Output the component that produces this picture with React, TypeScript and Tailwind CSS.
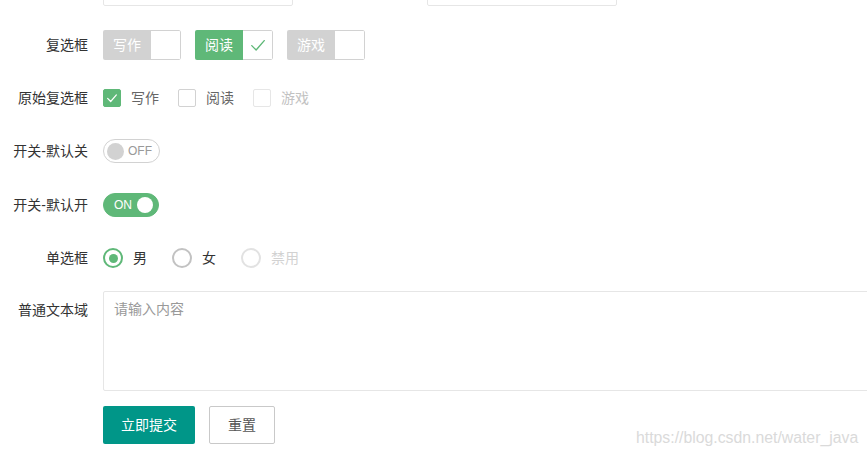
import React from "react";

const font = { fontFamily: '"Liberation Sans", "Noto Sans CJK SC", sans-serif' };

function Label({ text, top }: { text: string; top?: boolean }) {
  return (
    <div
      className={`w-[103px] shrink-0 pr-[15px] text-right text-[14px] leading-[20px] text-[#333] ${
        top ? "self-start pt-[9px]" : ""
      }`}
    >
      {text}
    </div>
  );
}

function Check({ className, width = 1.4 }: { className: string; width?: number }) {
  return (
    <svg viewBox="0 0 16 16" className={className} fill="none">
      <polyline points="3,8.5 6.5,12 13,4.5" stroke="currentColor" strokeWidth={width} strokeLinecap="round" strokeLinejoin="round" />
    </svg>
  );
}

function SkinCheckbox({ text, checked }: { text: string; checked?: boolean }) {
  return (
    <div className="flex h-[30px] w-[78px] shrink-0 overflow-hidden rounded-[2px]">
      <span
        className={`flex h-full w-[48px] items-center justify-center text-[14px] text-white ${
          checked ? "bg-[#5FB878]" : "bg-[#d2d2d2]"
        }`}
      >
        {text}
      </span>
      <span className="flex h-full w-[30px] items-center justify-center rounded-r-[2px] border border-l-0 border-[#d2d2d2] bg-white">
        {checked && <Check className="h-[20px] w-[20px] text-[#5FB878]" width={1.1} />}
      </span>
    </div>
  );
}

function PlainCheckbox({ text, state }: { text: string; state: "on" | "off" | "disabled" }) {
  const box =
    state === "on"
      ? "bg-[#5FB878] border-[#5FB878]"
      : state === "off"
      ? "bg-white border-[#d2d2d2]"
      : "bg-white border-[#e6e6e6]";
  return (
    <div className="mr-[19px] flex items-center">
      <span className={`flex h-[18px] w-[18px] items-center justify-center rounded-[2px] border ${box}`}>
        {state === "on" && <Check className="h-[14px] w-[14px] text-white" />}
      </span>
      <span className={`ml-[10px] text-[14px] ${state === "disabled" ? "text-[#c2c2c2]" : "text-[#666]"}`}>
        {text}
      </span>
    </div>
  );
}

function Radio({ text, state }: { text: string; state: "on" | "off" | "disabled" }) {
  const ring =
    state === "on" ? "border-[#5FB878]" : state === "off" ? "border-[#c2c2c2]" : "border-[#e2e2e2]";
  return (
    <div className="mr-[25px] flex items-center">
      <span className={`flex h-[20px] w-[20px] items-center justify-center rounded-full border-2 ${ring}`}>
        {state === "on" && <span className="h-[9px] w-[9px] rounded-full bg-[#5FB878]" />}
      </span>
      <span className={`ml-[10px] text-[14px] ${state === "disabled" ? "text-[#d2d2d2]" : "text-[#333]"}`}>
        {text}
      </span>
    </div>
  );
}

export default function App() {
  return (
    <div className="relative h-[458px] w-[867px] overflow-hidden bg-white" style={font}>
      {/* input row cut off by the top edge */}
      <div className="flex h-[6px] items-end overflow-hidden">
        <div className="ml-[103px] h-[38px] w-[190px] shrink-0 rounded-[2px] border border-[#e6e6e6]" />
        <div className="ml-[134px] h-[38px] w-[190px] shrink-0 rounded-[2px] border border-[#e6e6e6]" />
      </div>

      <div className="mt-[24px] flex h-[30px] items-center">
        <Label text="复选框" />
        <div className="flex gap-[14px]">
          <SkinCheckbox text="写作" />
          <SkinCheckbox text="阅读" checked />
          <SkinCheckbox text="游戏" />
        </div>
      </div>

      <div className="mt-[29px] flex h-[18px] items-center">
        <Label text="原始复选框" />
        <PlainCheckbox text="写作" state="on" />
        <PlainCheckbox text="阅读" state="off" />
        <PlainCheckbox text="游戏" state="disabled" />
      </div>

      <div className="mt-[32px] flex h-[24px] items-center">
        <Label text="开关-默认关" />
        <div className="flex h-[24px] w-[57px] items-center rounded-full border border-[#d2d2d2] bg-white pl-[3px]">
          <span className="h-[17px] w-[17px] rounded-full bg-[#d2d2d2]" />
          <span className="ml-[4px] text-[12px] text-[#999]">OFF</span>
        </div>
      </div>

      <div className="mt-[30px] flex h-[24px] items-center">
        <Label text="开关-默认开" />
        <div className="flex h-[24px] w-[56px] items-center justify-between rounded-full border border-[#5FB878] bg-[#5FB878] pl-[10px] pr-[5px]">
          <span className="text-[12px] text-white">ON</span>
          <span className="h-[16px] w-[16px] rounded-full bg-white" />
        </div>
      </div>

      <div className="mt-[31px] flex h-[20px] items-center">
        <Label text="单选框" />
        <Radio text="男" state="on" />
        <Radio text="女" state="off" />
        <Radio text="禁用" state="disabled" />
      </div>

      <div className="mt-[23px] flex h-[100px]">
        <Label text="普通文本域" top />
        <div className="h-[100px] w-[800px] shrink-0 rounded-[2px] border border-[#e6e6e6] px-[10px] pt-[7px] text-[14px] leading-[20px] text-[#999]">
          请输入内容
        </div>
      </div>

      <div className="mt-[15px] flex h-[38px] items-center">
        <div className="w-[103px] shrink-0" />
        <button className="h-[38px] w-[92px] rounded-[2px] bg-[#009688] text-[14px] text-white">立即提交</button>
        <button className="ml-[14px] h-[38px] w-[66px] rounded-[2px] border border-[#c9c9c9] bg-white text-[14px] text-[#555]">
          重置
        </button>
      </div>

      <div className="absolute bottom-[8px] left-[636px] text-[15.8px] text-[#dadada]">https://blog.csdn.net/water_java</div>
    </div>
  );
}
